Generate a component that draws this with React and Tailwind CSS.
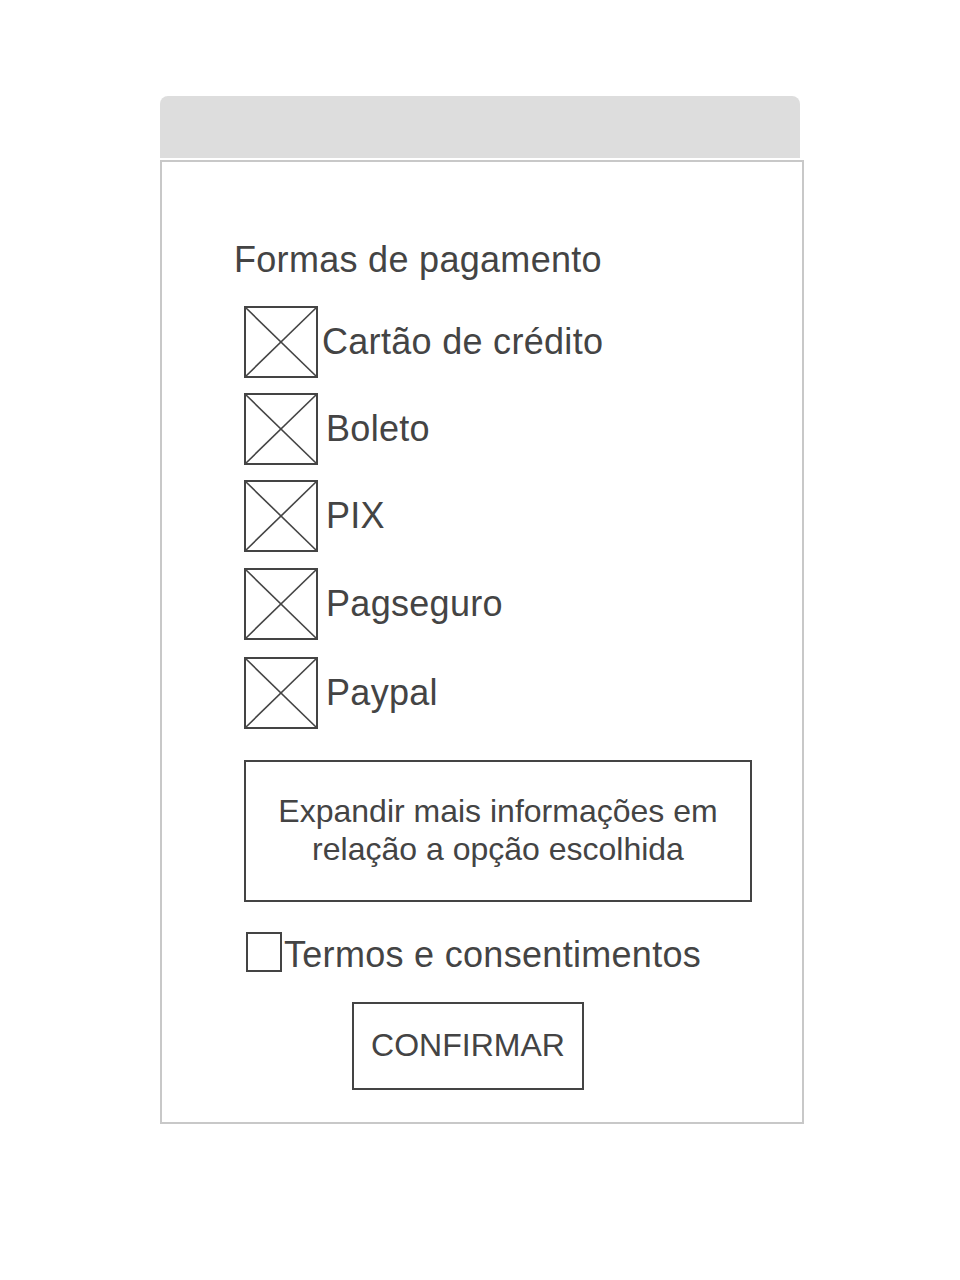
import React from "react";

const font = { fontFamily: '"Liberation Sans", Arial, sans-serif' };

function XBox() {
  return (
    <div className="relative w-[74px] h-[72px] border-2 border-[#444444] shrink-0">
      <svg className="absolute inset-0 w-full h-full" viewBox="0 0 70 68" preserveAspectRatio="none">
        <line x1="0" y1="0" x2="70" y2="68" stroke="#444444" strokeWidth="1.6" />
        <line x1="70" y1="0" x2="0" y2="68" stroke="#444444" strokeWidth="1.6" />
      </svg>
    </div>
  );
}

const options = [
  { label: "Cartão de crédito", ml: "ml-[4px]", mt: "mt-0" },
  { label: "Boleto", ml: "ml-[8px]", mt: "mt-[15px]" },
  { label: "PIX", ml: "ml-[8px]", mt: "mt-[15px]" },
  { label: "Pagseguro", ml: "ml-[8px]", mt: "mt-[16px]" },
  { label: "Paypal", ml: "ml-[8px]", mt: "mt-[17px]" },
];

export default function App() {
  return (
    <div className="w-[960px] h-[1280px] bg-white pt-[96px] pl-[160px] text-[#444444]" style={font}>
      <div className="w-[640px] h-[62px] bg-[#dddddd] rounded-t-[8px]" />
      <div className="mt-[2px] w-[644px] h-[964px] border-2 border-[#c8c8c8] flex flex-col">
        <div className="mt-[76px] pl-[72px] text-[36px] leading-[43px] tracking-[0.3px]">Formas de pagamento</div>
        <div className="mt-[25px] pl-[82px] flex flex-col">
          {options.map((o) => (
            <div key={o.label} className={`${o.mt} flex h-[72px]`}>
              <XBox />
              <div className={`${o.ml} text-[36px] leading-[72px] h-[72px] tracking-[0.3px] whitespace-nowrap`}>{o.label}</div>
            </div>
          ))}
        </div>
        <div className="mt-[31px] ml-[82px] w-[508px] h-[142px] border-2 border-[#444444] flex items-center justify-center text-center text-[32px] leading-[38px]">
          <div className="-mt-[2px]">
            Expandir mais informações em
            <br />
            relação a opção escolhida
          </div>
        </div>
        <div className="mt-[30px] ml-[84px] flex items-start">
          <div className="w-[36px] h-[40px] border-2 border-[#444444] shrink-0" />
          <div className="ml-[2px] text-[36px] leading-[43px] mt-px tracking-[0.3px] whitespace-nowrap">Termos e consentimentos</div>
        </div>
        <div className="mt-[26px] ml-[190px] w-[232px] h-[88px] border-2 border-[#444444] flex items-center justify-center text-[32px] leading-[38px]">
          <span className="-mt-[2px]">CONFIRMAR</span>
        </div>
      </div>
    </div>
  );
}
